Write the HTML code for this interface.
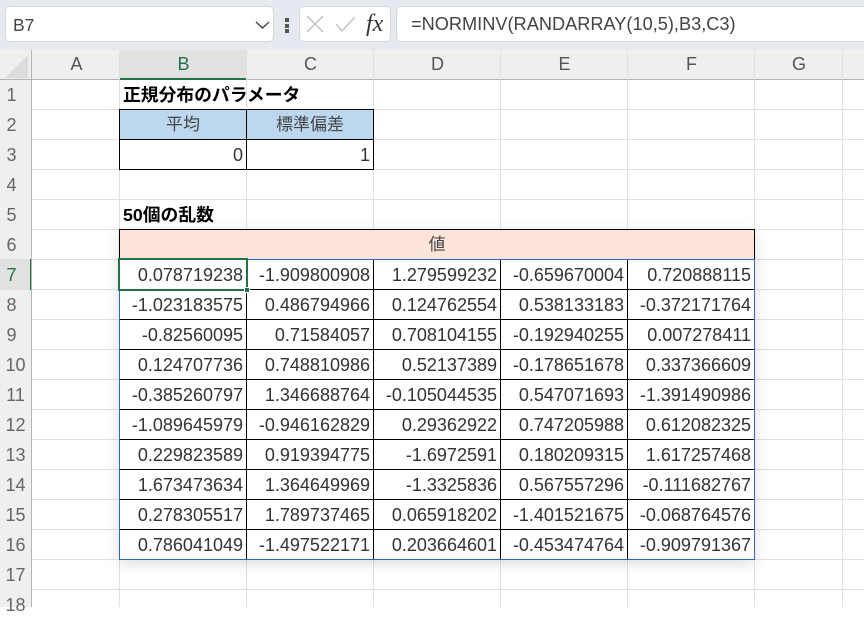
<!DOCTYPE html>
<html lang="ja"><head><meta charset="utf-8"><title>Excel</title>
<style>
html,body{margin:0;padding:0;background:#fff}
body{width:864px;height:607px;overflow:hidden;position:relative;font-family:"Liberation Sans","Noto Sans CJK JP",sans-serif;color:#333;font-size:18px}
div{position:absolute;box-sizing:border-box}
.v{top:50px;bottom:0;width:1px;background:#e0e0e0}
.h{left:32px;right:0;height:1px;background:#e0e0e0}
.ch{top:50px;height:29px;line-height:29px;text-align:center;color:#555;font-size:18px;padding-left:2px}
.rh{left:0;width:31px;height:30px;line-height:30px;text-align:center;color:#666;font-size:18px}
.c{height:30px;width:127px;line-height:30px;text-align:right;padding-right:3px;white-space:nowrap;color:#333}
.k{background:#000}
.b{background:#2f66c0}
.t{font-weight:bold;font-size:17.8px;line-height:30px;height:30px;white-space:nowrap;color:#000}
</style></head><body>
<div style="left:0;top:0;width:864px;height:50px;background:#e6e9f0"></div>
<div style="left:5px;top:6px;width:269px;height:36px;background:#fff;border:1px solid #d6d8dc;border-radius:5px"></div>
<div style="left:13px;top:7px;height:36px;line-height:36px;font-size:17.5px;color:#444">B7</div>
<svg style="position:absolute;left:254px;top:20px" width="18" height="10"><path d="M2 2 L8.5 8 L15 2" fill="none" stroke="#444" stroke-width="1.4"/></svg>
<div style="left:285px;top:18px;width:4px;height:4px;background:#555"></div>
<div style="left:285px;top:24px;width:4px;height:4px;background:#555"></div>
<div style="left:285px;top:29px;width:4px;height:4px;background:#555"></div>
<div style="left:299px;top:6px;width:92px;height:36px;background:#fff;border:1px solid #d6d8dc;border-radius:5px"></div>
<svg style="position:absolute;left:305px;top:14px" width="52" height="20"><path d="M2 2 L18 18 M18 2 L2 18" fill="none" stroke="#c4c4c4" stroke-width="1.5"/><path d="M31 10 L37 17 L50 3" fill="none" stroke="#c4c4c4" stroke-width="1.5"/></svg>
<div style="left:366px;top:10px;height:28px;line-height:28px;font-family:'Liberation Serif',serif;font-style:italic;font-size:24px;color:#333">fx</div>
<div style="left:396px;top:6px;width:480px;height:36px;background:#fff;border:1px solid #d6d8dc;border-radius:5px"></div>
<div style="left:411px;top:6px;height:36px;line-height:36px;font-size:18.2px;color:#444;white-space:nowrap">=NORMINV(RANDARRAY(10,5),B3,C3)</div>

<div style="left:0;top:50px;width:864px;height:29px;background:#efefef"></div>
<div style="left:0;top:79px;width:31px;height:528px;background:#efefef"></div>
<div style="left:119px;top:50px;width:127px;height:29px;background:#e1e1e1"></div>
<div style="left:0;top:259px;width:31px;height:31px;background:#e1e1e1"></div>
<svg style="position:absolute;left:5px;top:55px" width="24" height="24"><path d="M23 0 V23 H0 Z" fill="#dcdcdc"/></svg>
<div style="left:31px;top:50px;width:1px;height:557px;background:#b4b4b4"></div>
<div style="left:0;top:79px;width:864px;height:1px;background:#b4b4b4"></div>
<div style="left:119px;top:78px;width:128px;height:2px;background:#217346"></div>
<div style="left:30px;top:259px;width:2px;height:31px;background:#217346"></div>

<div class="v" style="left:119px"></div><div class="v" style="left:246px"></div><div class="v" style="left:373px"></div><div class="v" style="left:500px"></div><div class="v" style="left:627px"></div><div class="v" style="left:754px"></div><div class="v" style="left:842px"></div>
<div class="v" style="left:31px;background:#b4b4b4"></div>
<div class="h" style="top:109px"></div><div class="h" style="top:139px"></div><div class="h" style="top:169px"></div><div class="h" style="top:199px"></div><div class="h" style="top:229px"></div><div class="h" style="top:259px"></div><div class="h" style="top:289px"></div><div class="h" style="top:319px"></div><div class="h" style="top:349px"></div><div class="h" style="top:379px"></div><div class="h" style="top:409px"></div><div class="h" style="top:439px"></div><div class="h" style="top:469px"></div><div class="h" style="top:499px"></div><div class="h" style="top:529px"></div><div class="h" style="top:559px"></div><div class="h" style="top:589px"></div>

<div class="ch" style="left:32px;width:87px">A</div><div class="ch" style="left:119px;width:127px;color:#217346">B</div><div class="ch" style="left:246px;width:127px">C</div><div class="ch" style="left:373px;width:127px">D</div><div class="ch" style="left:500px;width:127px">E</div><div class="ch" style="left:627px;width:127px">F</div><div class="ch" style="left:754px;width:88px">G</div>
<div class="rh" style="top:80px;left:-4px">1</div><div class="rh" style="top:110px;left:-4px">2</div><div class="rh" style="top:140px;left:-4px">3</div><div class="rh" style="top:170px;left:-4px">4</div><div class="rh" style="top:200px;left:-4px">5</div><div class="rh" style="top:230px;left:-4px">6</div><div class="rh" style="top:260px;left:-4px;color:#217346">7</div><div class="rh" style="top:290px;left:-4px">8</div><div class="rh" style="top:320px;left:-4px">9</div><div class="rh" style="top:350px">10</div><div class="rh" style="top:380px">11</div><div class="rh" style="top:410px">12</div><div class="rh" style="top:440px">13</div><div class="rh" style="top:470px">14</div><div class="rh" style="top:500px">15</div><div class="rh" style="top:530px">16</div><div class="rh" style="top:560px">17</div><div class="rh" style="top:590px">18</div>

<div class="t" style="left:123px;top:80px">正規分布のパラメータ</div>
<div class="t" style="left:123px;top:200px">50個の乱数</div>

<div style="left:119px;top:109px;width:255px;height:31px;background:#bdd7ee"></div>
<div class="c" style="left:120px;top:110px;width:126px;text-align:center;padding:0;color:#444;font-size:17px">平均</div>
<div class="c" style="left:247px;top:110px;width:126px;text-align:center;padding:0;color:#444;font-size:17px">標準偏差</div>
<div class="k" style="left:119px;top:109px;width:255px;height:1px"></div><div class="k" style="left:119px;top:139px;width:255px;height:1px"></div><div class="k" style="left:119px;top:169px;width:255px;height:1px"></div>
<div class="k" style="left:119px;top:109px;width:1px;height:61px"></div><div class="k" style="left:246px;top:109px;width:1px;height:61px"></div><div class="k" style="left:373px;top:109px;width:1px;height:61px"></div>
<div class="c" style="left:119px;top:140px">0</div><div class="c" style="left:246px;top:140px">1</div>

<div style="left:119px;top:229px;width:636px;height:331px;background:#fff;box-shadow:0 4px 14px rgba(0,0,0,.13)"></div>
<div style="left:119px;top:229px;width:636px;height:31px;background:#fde4d8"></div>
<div class="c" style="left:120px;top:230px;width:634px;text-align:center;padding:0;color:#444;font-size:17px">値</div>
<div class="k" style="left:119px;top:229px;width:636px;height:1px"></div><div class="k" style="left:119px;top:229px;width:1px;height:31px"></div><div class="k" style="left:754px;top:229px;width:1px;height:31px"></div>
<div class="k" style="left:120px;top:289px;width:634px;height:1px"></div><div class="k" style="left:120px;top:319px;width:634px;height:1px"></div><div class="k" style="left:120px;top:349px;width:634px;height:1px"></div><div class="k" style="left:120px;top:379px;width:634px;height:1px"></div><div class="k" style="left:120px;top:409px;width:634px;height:1px"></div><div class="k" style="left:120px;top:439px;width:634px;height:1px"></div><div class="k" style="left:120px;top:469px;width:634px;height:1px"></div><div class="k" style="left:120px;top:499px;width:634px;height:1px"></div><div class="k" style="left:120px;top:529px;width:634px;height:1px"></div>
<div class="k" style="left:246px;top:260px;width:1px;height:299px"></div><div class="k" style="left:373px;top:260px;width:1px;height:299px"></div><div class="k" style="left:500px;top:260px;width:1px;height:299px"></div><div class="k" style="left:627px;top:260px;width:1px;height:299px"></div>
<div class="b" style="left:119px;top:259px;width:636px;height:1px"></div><div class="b" style="left:119px;top:559px;width:636px;height:1px"></div><div class="b" style="left:119px;top:259px;width:1px;height:301px"></div><div class="b" style="left:754px;top:259px;width:1px;height:301px"></div>

<div class="c" style="left:119px;top:260px">0.078719238</div><div class="c" style="left:246px;top:260px">-1.909800908</div><div class="c" style="left:373px;top:260px">1.279599232</div><div class="c" style="left:500px;top:260px">-0.659670004</div><div class="c" style="left:627px;top:260px">0.720888115</div>
<div class="c" style="left:119px;top:290px">-1.023183575</div><div class="c" style="left:246px;top:290px">0.486794966</div><div class="c" style="left:373px;top:290px">0.124762554</div><div class="c" style="left:500px;top:290px">0.538133183</div><div class="c" style="left:627px;top:290px">-0.372171764</div>
<div class="c" style="left:119px;top:320px">-0.82560095</div><div class="c" style="left:246px;top:320px">0.71584057</div><div class="c" style="left:373px;top:320px">0.708104155</div><div class="c" style="left:500px;top:320px">-0.192940255</div><div class="c" style="left:627px;top:320px">0.007278411</div>
<div class="c" style="left:119px;top:350px">0.124707736</div><div class="c" style="left:246px;top:350px">0.748810986</div><div class="c" style="left:373px;top:350px">0.52137389</div><div class="c" style="left:500px;top:350px">-0.178651678</div><div class="c" style="left:627px;top:350px">0.337366609</div>
<div class="c" style="left:119px;top:380px">-0.385260797</div><div class="c" style="left:246px;top:380px">1.346688764</div><div class="c" style="left:373px;top:380px">-0.105044535</div><div class="c" style="left:500px;top:380px">0.547071693</div><div class="c" style="left:627px;top:380px">-1.391490986</div>
<div class="c" style="left:119px;top:410px">-1.089645979</div><div class="c" style="left:246px;top:410px">-0.946162829</div><div class="c" style="left:373px;top:410px">0.29362922</div><div class="c" style="left:500px;top:410px">0.747205988</div><div class="c" style="left:627px;top:410px">0.612082325</div>
<div class="c" style="left:119px;top:440px">0.229823589</div><div class="c" style="left:246px;top:440px">0.919394775</div><div class="c" style="left:373px;top:440px">-1.6972591</div><div class="c" style="left:500px;top:440px">0.180209315</div><div class="c" style="left:627px;top:440px">1.617257468</div>
<div class="c" style="left:119px;top:470px">1.673473634</div><div class="c" style="left:246px;top:470px">1.364649969</div><div class="c" style="left:373px;top:470px">-1.3325836</div><div class="c" style="left:500px;top:470px">0.567557296</div><div class="c" style="left:627px;top:470px">-0.111682767</div>
<div class="c" style="left:119px;top:500px">0.278305517</div><div class="c" style="left:246px;top:500px">1.789737465</div><div class="c" style="left:373px;top:500px">0.065918202</div><div class="c" style="left:500px;top:500px">-1.401521675</div><div class="c" style="left:627px;top:500px">-0.068764576</div>
<div class="c" style="left:119px;top:530px">0.786041049</div><div class="c" style="left:246px;top:530px">-1.497522171</div><div class="c" style="left:373px;top:530px">0.203664601</div><div class="c" style="left:500px;top:530px">-0.453474764</div><div class="c" style="left:627px;top:530px">-0.909791367</div>

<div style="left:118px;top:258px;width:130px;height:33px;border:2px solid #217346"></div>
<div style="left:244px;top:287px;width:6px;height:6px;background:#217346;border:1px solid #fff"></div>
</body></html>
